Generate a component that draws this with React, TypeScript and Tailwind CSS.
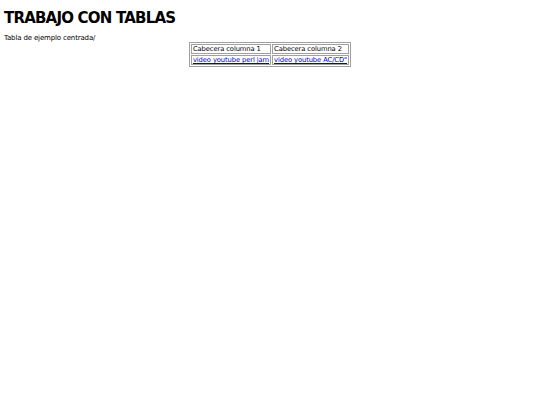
export default function App() {
  return (
    <div className="min-h-[405px] bg-white px-1 text-black" style={{ fontFamily: '"DejaVu Sans", sans-serif' }}>
      <h1 className="pt-[10px] text-[15px] font-bold leading-[16px] tracking-[-0.8px]">TRABAJO CON TABLAS</h1>
      <p className="mt-[8px] text-[7px] leading-[8px] tracking-[-0.15px]">Tabla de ejemplo centrada/</p>
      <div className="flex justify-center">
        <table className="border border-[#a0a0a0] border-separate border-spacing-[1px] text-[6.75px] leading-[8px] tracking-[-0.1px]">
          <tbody>
            <tr>
              <td className="border border-[#a0a0a0] px-[1px] py-0">Cabecera columna 1</td>
              <td className="border border-[#a0a0a0] px-[1px] py-0">Cabecera columna 2</td>
            </tr>
            <tr>
              <td className="border border-[#a0a0a0] px-[1px] py-0">
                <a href="#" className="text-[#0000cc] underline">video youtube perl jam</a>
              </td>
              <td className="border border-[#a0a0a0] px-[1px] py-0">
                <a href="#" className="text-[#0000cc] underline">video youtube AC/CD"</a>
              </td>
            </tr>
          </tbody>
        </table>
      </div>
    </div>
  );
}
